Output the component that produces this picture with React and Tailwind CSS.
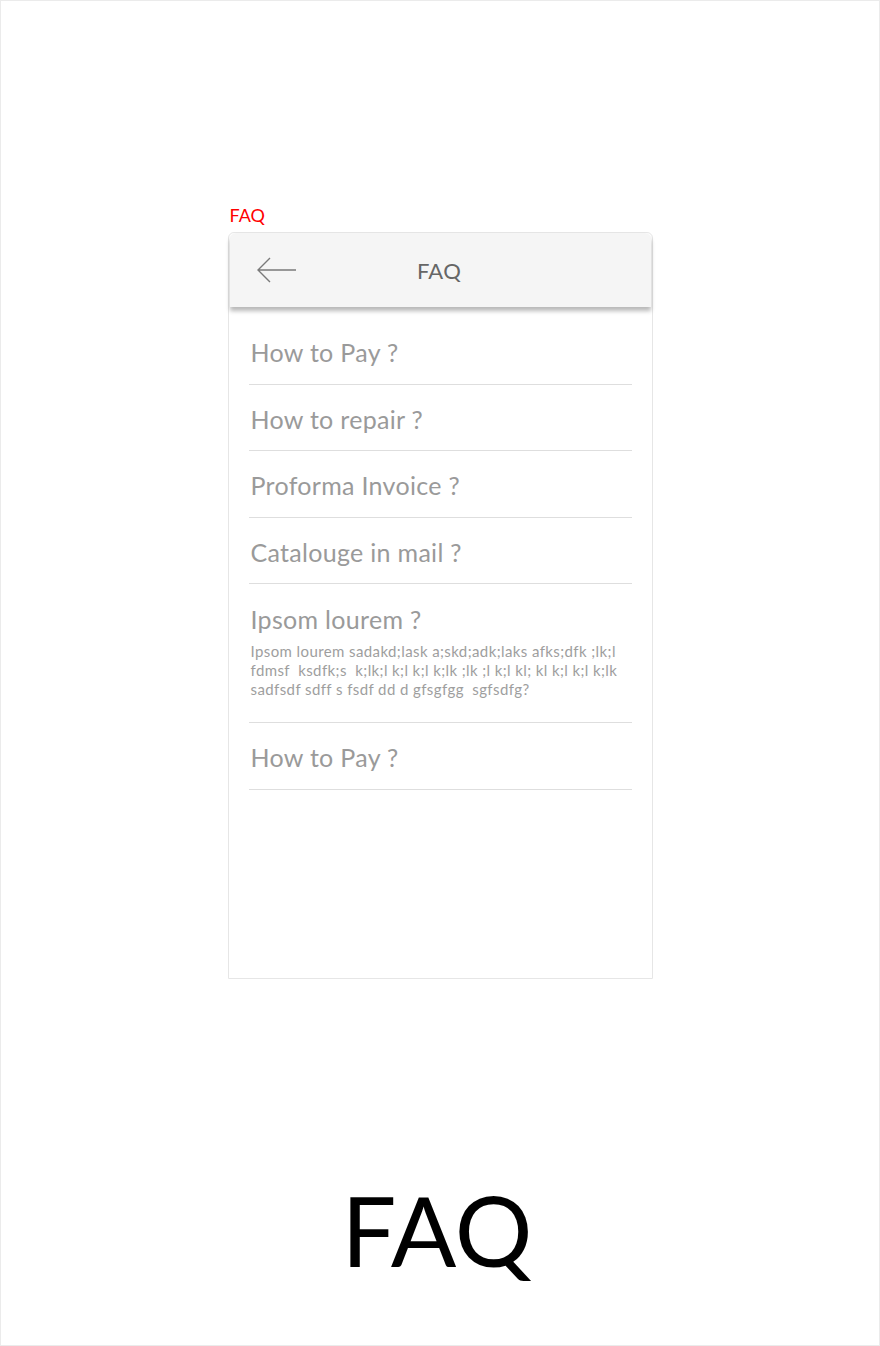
import React from 'react';

const faqs = [
  { q: 'How to Pay ?' },
  { q: 'How to repair ?' },
  { q: 'Proforma Invoice ?' },
  { q: 'Catalouge in mail ?' },
  {
    q: 'Ipsom lourem ?',
    a: 'Ipsom lourem sadakd;lask a;skd;adk;laks afks;dfk ;lk;l fdmsf\u00a0 ksdfk;s\u00a0 k;lk;l k;l k;l k;lk ;lk ;l k;l kl; kl k;l k;l k;lk sadfsdf sdff s fsdf dd d gfsgfgg\u00a0 sgfsdfg?',
  },
  { q: 'How to Pay ?' },
];

const App = () => {
  return (
    <div className="w-[880px] h-[1346px] bg-white border border-[#ebebeb] flex flex-col items-center" style={{ fontFamily: 'Lato, "Noto Sans", sans-serif' }}>
      <div className="w-[425px] mt-[202px]">
        <div className="text-[18px] leading-[24px] text-[#ff0000] pl-[2px] mb-[5px]">FAQ</div>

        <div className="h-[747px] border border-[#e6e6e6] rounded-t-[6px] bg-white">
          <div className="h-[74px] bg-[#f5f5f5] rounded-t-[6px] mx-px flex items-center relative shadow-[0_4px_4px_rgba(0,0,0,0.28)]">
            <svg width="42" height="28" viewBox="0 0 42 28" className="ml-[26px]" fill="none">
              <path d="M2 14H40M14 2L2 14L14 26" stroke="#7a7a7a" strokeWidth="1.4" />
            </svg>
            <div className="absolute inset-0 flex items-center justify-center text-[22px] text-[#666666] pr-[2px] tracking-[0.3px]">FAQ</div>
          </div>

          <div className="px-[20px] pt-[11px]">
            {faqs.map((item, i) => (
              <div key={i} className="border-b border-[#dedede] px-[2px]">
                {item.a ? (
                  <div className="pt-[21px] pb-[23px]">
                    <div className="text-[25px] leading-[28px] tracking-[0.3px] text-[#9a9a9a]">{item.q}</div>
                    <p className="mt-[9px] text-[15px] leading-[19px] tracking-[0.4px] text-[#9e9e9e]">{item.a}</p>
                  </div>
                ) : (
                  <div className="h-[65.5px] flex items-center pt-[4px] text-[25px] tracking-[0.3px] text-[#9a9a9a]">{item.q}</div>
                )}
              </div>
            ))}
          </div>
        </div>
      </div>

      <div className="mt-[202px] text-[97px] leading-none text-black pr-[6px]">FAQ</div>
    </div>
  );
};

export default App;
